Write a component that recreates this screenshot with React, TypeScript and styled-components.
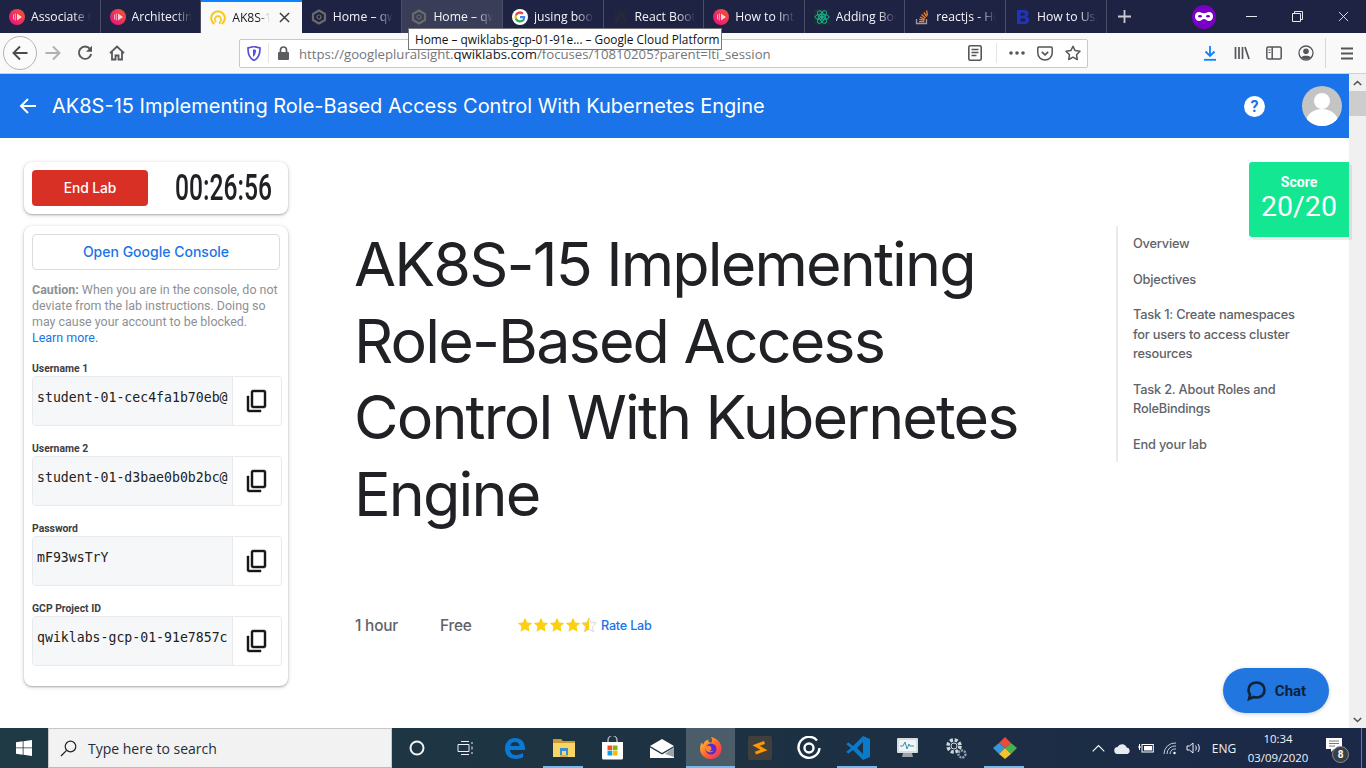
import React from "react";
import styled, { createGlobalStyle } from "styled-components";

const Global = createGlobalStyle`
  html, body { margin: 0; padding: 0; overflow: hidden; background: #fff; }
  * { box-sizing: border-box; }
`;

const UI = `"Open Sans", "Noto Sans", sans-serif`;
const GS = `Inter, "Noto Sans", sans-serif`;
const RB = `Roboto, "Liberation Sans", sans-serif`;

const Shell = styled.div`
  position: relative; width: 1366px; height: 768px; display: flex; flex-direction: column; overflow: hidden;
  font-family: ${RB};
`;

/* ---------- tab strip ---------- */
const TabStrip = styled.div`display: flex; height: 33px; background: #1f2343; flex: none;`;
const Tab = styled.div<{ $active?: boolean; $hover?: boolean }>`
  width: 100.6px; flex: none; display: flex; align-items: center; padding-left: 9px; gap: 6px; position: relative;
  color: ${p => (p.$active ? "#16181f" : "#f4f4f8")};
  background: ${p => (p.$active ? "#f9f9fa" : p.$hover ? "#3a3d58" : "transparent")};
  border-top: ${p => (p.$active ? "2px solid #0a84ff" : "none")};
  border-right: ${p => (p.$active ? "none" : "1px solid #4a4d66")};
`;
const TabIcon = styled.span`width: 16px; height: 16px; flex: none; display: flex; align-items: center; justify-content: center;`;
const TabTitle = styled.span<{ $short?: boolean }>`
  font: 400 12.2px ${UI}; white-space: nowrap; overflow: hidden; width: ${p => (p.$short ? "38px" : "60px")};
  -webkit-mask-image: linear-gradient(to right, #000 70%, transparent 100%);
  mask-image: linear-gradient(to right, #000 70%, transparent 100%);
`;
const NewTab = styled.div`width: 36px; display: flex; align-items: center; justify-content: center;`;
const StripSpace = styled.div`flex: 1;`;
const Mask = styled.div`
  width: 24px; height: 24px; border-radius: 50%; background: #7a00c8; display: flex; align-items: center; justify-content: center; margin-right: 12px; align-self: center;
`;
const WinBtn = styled.div`width: 46px; display: flex; align-items: center; justify-content: center;`;

/* ---------- navigation bar ---------- */
const NavBar = styled.div`height: 41px; flex: none; background: #f9f9fa; display: flex; align-items: center; border-bottom: 1px solid #cfd0d2;`;
const BackCircle = styled.div`
  width: 34px; height: 34px; margin-left: 3px; border: 1px solid #b4b4b6; border-radius: 50%; background: #fbfbfb;
  display: flex; align-items: center; justify-content: center; flex: none;
`;
const NavIcon = styled.div<{ $w?: number }>`width: ${p => p.$w ?? 32}px; flex: none; display: flex; align-items: center; justify-content: center;`;
const UrlBar = styled.div`
  width: 849px; margin-left: 106px; height: 29px; flex: none; background: #fff; border: 1px solid #c9c9cb; border-radius: 2px;
  display: flex; align-items: center;
`;
const UrlDivider = styled.span`width: 1px; height: 20px; background: #e4e4e6; flex: none;`;
const PageActionsDivider = styled(UrlDivider)`margin: 0 6px 0 5px;`;
const UrlText = styled.div`flex: 1; font: 400 13.2px ${UI}; color: #75757a; white-space: nowrap; padding: 1px 0 0 1px;`;
const UrlHost = styled.span`color: #18181c;`;
const NavSpacer = styled.div`width: 106px; flex: none;`;
const NavDivider = styled.span`width: 1px; height: 30px; background: #d8d8da; margin: 0 6px 0 3px; flex: none;`;

/* ---------- page ---------- */
const Viewport = styled.div`flex: 1; display: flex; min-height: 0;`;
const Page = styled.div`flex: 1; position: relative; background: #fff; display: flex; flex-direction: column; min-width: 0;`;
const Scrollbar = styled.div`width: 17px; flex: none; background: #f0f0f0; display: flex; flex-direction: column; align-items: center; justify-content: space-between;`;
const ScrollTop = styled.div`width: 100%; display: flex; flex-direction: column; align-items: center;`;
const ScrollArrow = styled.div`height: 17px; display: flex; align-items: center; justify-content: center;`;
const Thumb = styled.div`width: 100%; height: 25px; background: #cdcdcd;`;

const Header = styled.header`height: 64px; flex: none; background: #1a73e8; display: flex; align-items: center; color: #fff; padding: 0 7px 0 18px;`;
const HeaderTitle = styled.h1`flex: 1; margin: 0 0 0 14px; font: 400 20px ${GS}; letter-spacing: 0; white-space: nowrap;`;
const HelpIcon = styled.div`
  width: 21px; height: 21px; border-radius: 50%; background: #fff; color: #1a73e8; font: 700 16px ${RB};
  display: flex; align-items: center; justify-content: center; margin-right: 37px;
`;
const Avatar = styled.div`width: 40px; height: 40px; border-radius: 50%; overflow: hidden; background: #c4c4c4;`;

const Body = styled.div`flex: 1; display: flex; padding: 24px 0 0 24px; min-height: 0;`;
const Side = styled.aside`width: 264px; flex: none; display: flex; flex-direction: column; gap: 12px;`;
const Card = styled.div`background: #fff; border-radius: 8px; box-shadow: 0 1px 2px rgba(60,64,67,.35), 0 1px 5px rgba(60,64,67,.18);`;
const TimerCard = styled(Card)`height: 52px; padding: 8px; display: flex; align-items: center; justify-content: space-between;`;
const EndBtn = styled.button`
  width: 116px; height: 36px; border: 0; border-radius: 4px; background: #d93025; color: #fff; font: 500 13.8px ${GS}; letter-spacing: -0.1px;
`;
const Timer = styled.div`
  font: 500 36px/36px ${RB}; color: #202124; width: 95px; margin-right: 10px; white-space: nowrap; transform: scaleX(.685); transform-origin: left center;
`;
const CredCard = styled(Card)`height: 460px; padding: 8px 6px 0 8px;`;
const ConsoleBtn = styled.div`
  width: 248px; height: 36px; border: 1px solid #dadce0; border-radius: 4px; color: #1a73e8; font: 500 14px ${GS}; padding-bottom: 1px;
  display: flex; align-items: center; justify-content: center;
`;
const Caution = styled.p`margin: 12px 0 0; width: 250px; font: 400 12.45px/16px ${RB}; color: #8d9196;`;
const Strong = styled.b`font-weight: 700;`;
const LearnMore = styled.a`color: #1a73e8; display: block;`;
const Fields = styled.div`margin-top: 14px; display: flex; flex-direction: column; gap: 14px;`;
const Label = styled.div`font: 700 10.4px/16px ${RB}; color: #3c4043; height: 16px; padding-top: 1px;`;
const FieldBox = styled.div`height: 50px; width: 250px; border: 1px solid #e8eaed; border-radius: 4px; display: flex;`;
const FieldValue = styled.div`
  flex: 1; min-width: 0; background: #f6f7f9; font: 400 13.2px/20px "DejaVu Sans Mono", "Liberation Mono", monospace; color: #202124; padding: 11px 4px 0 4px; white-space: nowrap; overflow: hidden;
  border-right: 1px solid #e8eaed; border-radius: 4px 0 0 4px;
`;
const CopyBtn = styled.div`width: 48px; flex: none; display: flex; align-items: center; justify-content: center;`;

const Main = styled.main`width: 700px; margin-left: 66px; flex: none; padding-top: 64px;`;
const Title = styled.h2`margin: 0; font: 400 61px/76.5px ${GS}; letter-spacing: -1.85px; color: #202124;`;
const Meta = styled.div`margin-top: 82px; display: flex; align-items: center; height: 22px; margin-left: 1px;`;
const MetaItem = styled.span<{ $w: number }>`width: ${p => p.$w}px; font: 500 15.4px ${GS}; color: #5f6368; letter-spacing: -0.2px;`;
const Stars = styled.span`display: flex; margin-right: 4px;`;
const RateLab = styled.a`font: 500 12.6px ${GS}; color: #1a73e8; letter-spacing: -0.2px;`;

const Toc = styled.nav`
  margin: 64px 0 0 62px; width: 200px; height: 236px; border-left: 2px solid #e8eaed; padding: 8px 0 0 15px; display: flex; flex-direction: column; gap: 16px; flex: none;
`;
const TocItem = styled.div`font: 500 12.8px/19.5px ${GS}; color: #5f6368; letter-spacing: -0.2px; width: 170px;`;

const Score = styled.div`
  position: absolute; right: 0; top: 88px; width: 100px; height: 75px; background: #14e792; color: #fff; border-radius: 3px 0 0 3px;
  box-shadow: 3px 3px 0 rgba(0,0,0,.08); display: flex; flex-direction: column; align-items: center; padding-top: 12px;
`;
const ScoreLabel = styled.div`font: 700 14px/16px ${RB};`;
const ScoreValue = styled.div`font: 400 28.5px/34px ${RB};`;
const Chat = styled.div`
  position: absolute; right: 20px; bottom: 15px; width: 106px; height: 45px; border-radius: 23px; background: #2176e0; color: #10223a;
  display: flex; align-items: center; justify-content: center; gap: 8px; font: 700 15px ${RB}; box-shadow: 0 1px 4px rgba(0,0,0,.2);
`;

const Tooltip = styled.div`
  position: absolute; left: 408px; top: 28px; width: 314px; height: 22px; background: #fff; border: 1px solid #767676; color: #111;
  font: 400 11.85px/20px ${UI}; padding-left: 6px; white-space: nowrap; z-index: 5;
`;

/* ---------- taskbar ---------- */
const Taskbar = styled.div`
  height: 40px; flex: none; display: flex; align-items: center; color: #fff;
  background: linear-gradient(to right, #1f3a44, #1d3242 50%, #1b2848);
`;
const StartBtn = styled.div`width: 48px; display: flex; align-items: center; justify-content: center; flex: none;`;
const SearchBox = styled.div`
  width: 344px; height: 40px; flex: none; background: #f2f2f2; border: 1px solid #c6c8c9; border-bottom-color: #b8babb; display: flex; align-items: center; padding-left: 11px; gap: 11px;
  color: #1c2f3a; font: 400 14px ${UI};
`;
const TaskIcon = styled.div<{ $open?: boolean; $active?: boolean }>`
  width: 49px; height: 40px; flex: none; display: flex; align-items: center; justify-content: center; position: relative;
  background: ${p => (p.$active ? "#4a5d69" : "transparent")};
  &::after {
    content: ""; display: ${p => (p.$open ? "block" : "none")}; position: absolute; bottom: 0; height: 2px; background: #76b9ed;
    left: ${p => (p.$active ? "0" : "4px")}; right: ${p => (p.$active ? "0" : "5px")};
  }
`;
const TaskSpace = styled.div`flex: 1;`;
const Tray = styled.div<{ $w: number }>`width: ${p => p.$w}px; height: 40px; flex: none; display: flex; align-items: center; justify-content: center; font: 400 12px ${UI}; color: #f0f3f6;`;
const Clock = styled.div`width: 70px; flex: none; text-align: center; font: 400 11.4px/19px ${UI}; color: #f0f3f6; margin-left: 1px;`;
const Notify = styled.div`width: 48px; height: 40px; flex: none; position: relative; display: flex; align-items: center; justify-content: center;`;
const NotifyBadge = styled.span`
  position: absolute; left: 19px; top: 18px; width: 17px; height: 17px; border-radius: 50%; background: #3a3f45; border: 1px solid #8a8d90; color: #fff;
  font: 700 10px/15px ${RB}; text-align: center;
`;
const DesktopEdge = styled.div`width: 5px; height: 40px; flex: none; border-left: 1px solid #6d7a88;`;

/* ---------- drawings ---------- */
const PS = () => (
  <svg width="16" height="16" viewBox="0 0 16 16">
    <defs><linearGradient id="ps" x1="0" y1="1" x2="1" y2="0"><stop offset="0" stopColor="#e80a89" /><stop offset="1" stopColor="#f15b2a" /></linearGradient></defs>
    <circle cx="8" cy="8" r="8" fill="url(#ps)" />
    <path d="M4.500 5.500v5M6.300 4.500v7" stroke="#ffc6d6" strokeWidth=".8" />
    <path d="M8 4.500v7L13 8z" fill="#ffd0dc" />
  </svg>
);
const Qwik = () => (
  <svg width="16" height="16" viewBox="0 0 16 16" fill="none">
    <path d="M4.500 14A6.800 6.800 0 1 1 11.500 14" stroke="#fbc816" strokeWidth="2" />
    <path d="M6.300 12A3.200 3.200 0 1 1 9.700 12V14" stroke="#fbc816" strokeWidth="1.600" />
  </svg>
);
const Hex = () => (
  <svg width="16" height="16" viewBox="0 0 16 16" fill="none">
    <path d="M8 1.500 14 5v6l-6 3.500L2 11V5z" stroke="#6a6a6a" strokeWidth="2.200" strokeLinejoin="round" />
    <circle cx="8" cy="8" r="2" stroke="#6a6a6a" strokeWidth="1.200" />
  </svg>
);
const G = () => (
  <svg width="16" height="16" viewBox="0 0 16 16">
    <circle cx="8" cy="8" r="8" fill="#fff" />
    <path d="M13.200 8.200c0-.4 0-.8-.1-1.200H8v2.200h3a2.500 2.500 0 0 1-1.100 1.700v1.400h1.800c1-1 1.500-2.400 1.500-4.100z" fill="#4285f4" />
    <path d="M8 13.500c1.500 0 2.700-.5 3.700-1.400l-1.800-1.400c-.5.300-1.100.5-1.900.5-1.400 0-2.700-1-3.100-2.300H3v1.400a5.500 5.500 0 0 0 5 3.200z" fill="#34a853" />
    <path d="M4.900 8.900a3.300 3.300 0 0 1 0-2.100V5.400H3a5.500 5.500 0 0 0 0 4.900z" fill="#fbbc05" />
    <path d="M8 4.700c.8 0 1.500.3 2.100.8l1.600-1.600A5.500 5.500 0 0 0 3 5.400l1.900 1.400C5.300 5.600 6.600 4.700 8 4.700z" fill="#ea4335" />
  </svg>
);
const DarkBoot = () => (
  <svg width="16" height="16" viewBox="0 0 16 16"><rect x="1" y="1" width="14" height="14" fill="#23253e" /><path d="M3 13 8 3l5 10" stroke="#2c2e46" fill="none" /></svg>
);
const Atom = () => (
  <svg width="16" height="16" viewBox="0 0 16 16" fill="none" stroke="#1bb08b" strokeWidth="1">
    <rect width="16" height="16" fill="#1c2f38" stroke="none" />
    <ellipse cx="8" cy="8" rx="7" ry="2.800" />
    <ellipse cx="8" cy="8" rx="7" ry="2.800" transform="rotate(60 8 8)" />
    <ellipse cx="8" cy="8" rx="7" ry="2.800" transform="rotate(120 8 8)" />
    <circle cx="8" cy="8" r="1.400" fill="#1bb08b" />
  </svg>
);
const SO = () => (
  <svg width="16" height="16" viewBox="0 0 16 16" fill="none">
    <path d="M2.500 10v4.500h10V10" stroke="#9a9aa0" strokeWidth="1.300" />
    <path d="M5 12.600h5.300M5.200 10.400l5.200 1M6 8l4.800 2.300M7.500 5.600l4 3.400M9.800 3.500l3 4.200M12.500 1.500l1 5" stroke="#f48024" strokeWidth="1.300" />
  </svg>
);
const BootB = () => (
  <svg width="16" height="16" viewBox="0 0 16 16"><path fillRule="evenodd" d="M2 1h7.500c2.600 0 4 1.400 4 3.500 0 1.300-.7 2.400-1.900 2.900 1.600.4 2.600 1.600 2.600 3.300 0 2.600-1.800 4.300-4.700 4.300H2zm3.600 2.800v3h2.600c1.100 0 1.700-.5 1.700-1.500s-.6-1.500-1.700-1.500zm0 5.500v3.300h3c1.200 0 1.900-.6 1.900-1.700s-.7-1.600-2-1.600z" fill="#2133b8" /></svg>
);
const Close = ({ c = "#fff", s = 12, w = 1 }: { c?: string; s?: number; w?: number }) => (
  <svg width={s} height={s} viewBox="0 0 12 12"><path d="M1 1l10 10M11 1 1 11" stroke={c} strokeWidth={w} /></svg>
);
const I = ({ w = 16, h = 16, children }: { w?: number; h?: number; children: React.ReactNode }) => (
  <svg width={w} height={h} viewBox={`0 0 ${w} ${h}`} fill="none">{children}</svg>
);
const ink = "#56565a";
const Copy = () => (
  <svg width="24" height="24" viewBox="0 0 24 24">
    <g transform="matrix(1 0 0 -1 0 24)">
      <path d="M16 1H4c-1.100 0-2 .9-2 2v14h2V3h12V1zm3 4H8c-1.100 0-2 .9-2 2v14c0 1.100.9 2 2 2h11c1.100 0 2-.9 2-2V7c0-1.100-.9-2-2-2zm0 16H8V7h11v14z" fill="#16181c" stroke="#16181c" strokeWidth=".45" />
    </g>
  </svg>
);
const Star = ({ half }: { half?: boolean }) => (
  <svg width="16" height="16" viewBox="0 0 16 16">
    <path d="M8 .8l2.200 4.700 5 .6-3.700 3.500 1 5.100L8 12.200l-4.500 2.500 1-5.100L.8 6.100l5-.6z" fill={half ? "none" : "#fdd00f"} stroke={half ? "#d8d8d8" : "none"} />
    {half && <path d="M8 .8v11.400l-4.500 2.500 1-5.100L.8 6.100l5-.6z" fill="#fdd00f" />}
  </svg>
);

const tabs: { t: string; i: React.ReactNode; a?: boolean; h?: boolean }[] = [
  { t: "Associate Cloud", i: <PS /> },
  { t: "Architecting with", i: <PS /> },
  { t: "AK8S-15 Imp", i: <Qwik />, a: true },
  { t: "Home – qwiklabs", i: <Hex /> },
  { t: "Home – qwiklabs", i: <Hex />, h: true },
  { t: "jusing bootstrap", i: <G /> },
  { t: "React Bootstrap", i: <DarkBoot /> },
  { t: "How to Integrate", i: <PS /> },
  { t: "Adding Bootstrap", i: <Atom /> },
  { t: "reactjs - How to", i: <SO /> },
  { t: "How to Use Bootstrap", i: <BootB /> },
];

const fields = [
  { l: "Username 1", v: "student-01-cec4fa1b70eb@" },
  { l: "Username 2", v: "student-01-d3bae0b0b2bc@" },
  { l: "Password", v: "mF93wsTrY" },
  { l: "GCP Project ID", v: "qwiklabs-gcp-01-91e7857c" },
];

export default function App() {
  return (
    <Shell>
      <Global />
      <TabStrip>
        {tabs.map((t, k) => (
          <Tab key={k} $active={t.a} $hover={t.h}>
            <TabIcon>{t.i}</TabIcon>
            <TabTitle $short={t.a}>{t.t}</TabTitle>
            {t.a && <TabIcon><Close c="#3c3c40" s={11} w={1.6} /></TabIcon>}
          </Tab>
        ))}
        <NewTab>
          <I w={15} h={15}><path d="M7.500 1v13M1 7.500h13" stroke="#c9cad4" strokeWidth="1.800" /></I>
        </NewTab>
        <StripSpace />
        <Mask>
          <svg width="18" height="9" viewBox="0 0 18 9"><path fillRule="evenodd" d="M4 0c2 0 3 1.300 5 1.300S12 0 14 0c2.500 0 4 1.800 4 4.200C18 7 16.300 9 13.800 9 11.700 9 10.800 7 9 7S6.300 9 4.200 9C1.700 9 0 7 0 4.200 0 1.800 1.500 0 4 0z" fill="#fff" /><ellipse cx="5" cy="4.300" rx="2" ry="1.300" fill="#7a00c8" /><ellipse cx="13" cy="4.300" rx="2" ry="1.300" fill="#7a00c8" /></svg>
        </Mask>
        <WinBtn><I w={11} h={11}><path d="M0 5.500h11" stroke="#e8e8ee" /></I></WinBtn>
        <WinBtn><I w={11} h={11}><path d="M.5 2.500h8v8h-8zM2.500 2.500v-2h8v8h-2" stroke="#e8e8ee" /></I></WinBtn>
        <WinBtn><Close c="#e8e8ee" s={11} /></WinBtn>
      </TabStrip>

      <NavBar>
        <BackCircle>
          <I w={18} h={18}><path d="M16.500 9H2.500M9 2.500 2.500 9 9 15.500" stroke="#4a4a4f" strokeWidth="1.900" /></I>
        </BackCircle>
        <NavIcon $w={32}>
          <I w={18} h={18}><path d="M1.500 9h14M9 2.500 15.500 9 9 15.500" stroke="#b1b1b3" strokeWidth="1.900" /></I>
        </NavIcon>
        <NavIcon $w={32}>
          <I w={16} h={16}><path d="M13 3.800A6.200 6.200 0 1 0 14.200 9" stroke={ink} strokeWidth="1.900" /><path d="M15 .8v6h-6z" fill={ink} /></I>
        </NavIcon>
        <NavIcon $w={32}>
          <I w={16} h={16}><path d="M1 8.200 8 1.500l7 6.700M3 7v7.500h3.500v-4h3v4H13V7" stroke={ink} strokeWidth="1.800" /></I>
        </NavIcon>
        <UrlBar>
          <NavIcon $w={28}>
            <svg width="14" height="15" viewBox="0 0 14 15"><path d="M7 .5 13 2c.2 6.500-1.800 10.500-6 12.500C2.800 12.500.8 8.500 1 2z" fill="none" stroke="#5a4fd8" strokeWidth="1.700" /><path d="M7.500 3.500h-1.500L6 11c2-1.500 3-3.500 3-7z" fill="#5a4fd8" /></svg>
          </NavIcon>
          <UrlDivider />
          <NavIcon $w={29}>
            <svg width="13" height="15" viewBox="0 0 13 15"><path d="M3.500 6V4a3 3 0 0 1 6 0v2" fill="none" stroke="#5c5c60" strokeWidth="1.700" /><rect x="1" y="6" width="11" height="8" rx="1" fill="#5c5c60" /></svg>
          </NavIcon>
          <UrlText>https://googlepluralsight.<UrlHost>qwiklabs.com</UrlHost>/focuses/10810205?parent=lti_session</UrlText>
          <NavIcon $w={32}>
            <I w={14} h={16}><rect x=".8" y=".8" width="12.400" height="14.400" rx="1.500" stroke={ink} strokeWidth="1.600" /><path d="M3.500 4.500h7M3.500 7.500h7M3.500 10.500h5" stroke={ink} strokeWidth="1.300" /></I>
          </NavIcon>
          <PageActionsDivider />
          <NavIcon $w={28}>
            <I w={16} h={4}><circle cx="2" cy="2" r="1.800" fill={ink} /><circle cx="8" cy="2" r="1.800" fill={ink} /><circle cx="14" cy="2" r="1.800" fill={ink} /></I>
          </NavIcon>
          <NavIcon $w={28}>
            <I w={16} h={15}><path d="M1.800 1h12.400a1 1 0 0 1 1 1v5c0 4-3.200 7-7.200 7S.8 11 .8 7V2a1 1 0 0 1 1-1z" stroke={ink} strokeWidth="1.500" /><path d="M4.800 5.800 8 8.800l3.200-3" stroke={ink} strokeWidth="1.700" /></I>
          </NavIcon>
          <NavIcon $w={28}>
            <I w={16} h={16}><path d="M8 1.200l2.100 4.400 4.900.7-3.500 3.400.8 4.800L8 12.200l-4.300 2.300.8-4.800L1 6.300l4.900-.7z" stroke={ink} strokeWidth="1.500" strokeLinejoin="round" /></I>
          </NavIcon>
        </UrlBar>
        <NavSpacer />
        <NavIcon>
          <I w={14} h={16}><path d="M7 1v10M2.500 6.500 7 11l4.500-4.500" stroke="#0a84ff" strokeWidth="1.800" /><path d="M1 14.800h12" stroke="#0a84ff" strokeWidth="1.800" /></I>
        </NavIcon>
        <NavIcon>
          <I w={16} h={14}><path d="M1.500 1v12M5 1v12M8.500 1v12M11 1l4 12" stroke={ink} strokeWidth="1.700" /></I>
        </NavIcon>
        <NavIcon>
          <I w={16} h={14}><rect x=".8" y="1" width="14.400" height="12" rx="1.500" stroke={ink} strokeWidth="1.500" /><path d="M6.200 1v12" stroke={ink} strokeWidth="1.500" /><path d="M2.500 4h2M2.500 6.500h2" stroke={ink} /></I>
        </NavIcon>
        <NavIcon>
          <I w={16} h={16}><circle cx="8" cy="8" r="7" stroke={ink} strokeWidth="1.300" /><circle cx="8" cy="6.300" r="2.800" fill={ink} /><path d="M3 12.500C4 10.200 12 10.200 13 12.500 11.500 14.500 4.500 14.500 3 12.500z" fill={ink} /></I>
        </NavIcon>
        <NavDivider />
        <NavIcon $w={30}>
          <I w={14} h={13}><path d="M1 1.500h12M1 6.500h12M1 11.500h12" stroke={ink} strokeWidth="1.800" /></I>
        </NavIcon>
      </NavBar>

      <Viewport>
        <Page>
          <Header>
            <I w={20} h={20}><path d="M18 10H3M10 3l-7 7 7 7" stroke="#fff" strokeWidth="2" /></I>
            <HeaderTitle>AK8S-15 Implementing Role-Based Access Control With Kubernetes Engine</HeaderTitle>
            <HelpIcon>?</HelpIcon>
            <Avatar>
              <svg width="40" height="40" viewBox="0 0 40 40"><circle cx="20" cy="15" r="8" fill="#fff" /><ellipse cx="20" cy="36" rx="16" ry="13" fill="#fff" /></svg>
            </Avatar>
          </Header>
          <Body>
            <Side>
              <TimerCard>
                <EndBtn>End Lab</EndBtn>
                <Timer>00:26:56</Timer>
              </TimerCard>
              <CredCard>
                <ConsoleBtn>Open Google Console</ConsoleBtn>
                <Caution>
                  <Strong>Caution:</Strong> When you are in the console, do not deviate from the lab instructions. Doing so may cause your account to be blocked.
                  <LearnMore>Learn more.</LearnMore>
                </Caution>
                <Fields>
                  {fields.map(f => (
                    <div key={f.l}>
                      <Label>{f.l}</Label>
                      <FieldBox>
                        <FieldValue>{f.v}</FieldValue>
                        <CopyBtn><Copy /></CopyBtn>
                      </FieldBox>
                    </div>
                  ))}
                </Fields>
              </CredCard>
            </Side>
            <Main>
              <Title>AK8S-15 Implementing Role-Based Access Control With Kubernetes Engine</Title>
              <Meta>
                <MetaItem $w={85}>1 hour</MetaItem>
                <MetaItem $w={77}>Free</MetaItem>
                <Stars><Star /><Star /><Star /><Star /><Star half /></Stars>
                <RateLab>Rate Lab</RateLab>
              </Meta>
            </Main>
            <Toc>
              <TocItem>Overview</TocItem>
              <TocItem>Objectives</TocItem>
              <TocItem>Task 1: Create namespaces for users to access cluster resources</TocItem>
              <TocItem>Task 2. About Roles and RoleBindings</TocItem>
              <TocItem>End your lab</TocItem>
            </Toc>
          </Body>
          <Score>
            <ScoreLabel>Score</ScoreLabel>
            <ScoreValue>20/20</ScoreValue>
          </Score>
          <Chat>
            <svg width="21" height="21" viewBox="0 0 21 21"><path d="M10.500 2.500c4.500 0 8 3 8 7.500s-3.500 7.500-8 7.500c-1 0-2-.2-2.800-.5L3 19l1-4.300C3 13.500 2.500 11.800 2.500 10c0-4.500 3.500-7.500 8-7.500z" fill="none" stroke="#10223a" strokeWidth="2.600" /></svg>
            Chat
          </Chat>
        </Page>
        <Scrollbar>
          <ScrollTop>
            <ScrollArrow><I w={9} h={6}><path d="M.8 5 4.500 1.500 8.200 5" stroke="#505050" strokeWidth="1.600" /></I></ScrollArrow>
            <Thumb />
          </ScrollTop>
          <ScrollArrow><I w={9} h={6}><path d="M.8 1 4.500 4.500 8.200 1" stroke="#505050" strokeWidth="1.600" /></I></ScrollArrow>
        </Scrollbar>
      </Viewport>

      <Taskbar>
        <StartBtn>
          <svg width="16" height="16" viewBox="0 0 16 16"><path d="M0 2.300 6.700 1.300V7.500H0zM7.500 1.200 16 0v7.500H7.500zM0 8.300h6.700v6.400L0 13.700zM7.500 8.300H16V16l-8.500-1.200z" fill="#fff" /></svg>
        </StartBtn>
        <SearchBox>
          <I w={17} h={17}><circle cx="10.500" cy="6.500" r="5.300" stroke="#222" strokeWidth="1.200" /><path d="M6.600 10.400 1 16" stroke="#222" strokeWidth="1.300" /></I>
          Type here to search
        </SearchBox>
        <TaskIcon>
          <I w={16} h={16}><circle cx="8" cy="8" r="6.500" stroke="#f2f5f6" strokeWidth="2" /></I>
        </TaskIcon>
        <TaskIcon>
          <I w={18} h={14}><path d="M4 .5h8M1 3.500h11v7H1zM4 13.500h8M15 1v2M15 5.500v3M15 11v2" stroke="#eef" strokeWidth="1" /></I>
        </TaskIcon>
        <TaskIcon>
          <svg width="22" height="22" viewBox="0 0 22 22"><path d="M11 1c6 0 10 4 10 10.500V13H6c.2 3 2.500 5 6 5 2.500 0 5-.8 7-2v4.300c-2 1.100-4.700 1.700-7.500 1.700C5 22 1 18 1 11.500 1 5.500 5 1 11 1zm4.500 8c0-2.500-1.800-4-4.500-4S6.600 6.500 6.200 9z" fill="#0a78d7" fillRule="evenodd" /></svg>
        </TaskIcon>
        <TaskIcon $open>
          <svg width="22" height="20" viewBox="0 0 22 20"><path d="M0 1h8l2 2h12v4H0z" fill="#c99a2e" /><path d="M0 5h22v14H0z" fill="#f8d568" /><path d="M7 10h8v7h-2v-4H9v4H7z" fill="#3a8fd0" /><path d="M7 17h8v2H7z" fill="#e0b040" /></svg>
        </TaskIcon>
        <TaskIcon>
          <svg width="23" height="24" viewBox="0 0 23 24"><path d="M7 7V4a4.500 4.500 0 0 1 9 0v3" stroke="#f2f2f2" fill="none" /><path d="M1 6h21v16a1.500 1.500 0 0 1-1.500 1.500h-18A1.500 1.500 0 0 1 1 22z" fill="#fff" /><path d="M6.500 9.500h4.700v4.700H6.500z" fill="#f25022" /><path d="M11.800 9.500h4.700v4.700h-4.700z" fill="#7fba00" /><path d="M6.500 14.800h4.700v4.700H6.500z" fill="#00a4ef" /><path d="M11.800 14.800h4.700v4.700h-4.700z" fill="#ffb900" /></svg>
        </TaskIcon>
        <TaskIcon>
          <svg width="24" height="19" viewBox="0 0 24 19"><path d="M0 7 12 0l12 7-12 7z" fill="#fff" /><path d="M0 8.500 12 15.500 24 8.500V19H0z" fill="#fff" /><path d="M24 8 15 15l9 3z" fill="#9aa5ab" /></svg>
        </TaskIcon>
        <TaskIcon $open $active>
          <svg width="24" height="24" viewBox="0 0 24 24">
            <defs><linearGradient id="ff" x1="0" y1="0" x2="1" y2="1"><stop offset="0" stopColor="#ffd53a" /><stop offset=".5" stopColor="#ff6a2a" /><stop offset="1" stopColor="#f0266a" /></linearGradient></defs>
            <path d="M12 23C5.500 23 1 18.500 1 12.500 1 10 2 7.500 3 6.500c.2 1 .6 1.800 1.200 2.300C5 6 7 4 9.500 3.500 9 5 9.500 6 11 6.500c3 .5 2.500-3 1-5.500 5 1 10.500 5 10.500 11.500C22.500 18.500 18 23 12 23z" fill="url(#ff)" />
            <circle cx="12" cy="13" r="5.500" fill="#5a2ad0" />
            <path d="M6 11c2-2 5-1.500 6 0 1 2 .5 3.500-2 4 4 1 7-1 7-4-1 6-10 8-11 0z" fill="#ff8a2a" />
          </svg>
        </TaskIcon>
        <TaskIcon>
          <svg width="24" height="24" viewBox="0 0 24 24"><rect width="24" height="24" rx="2" fill="#403f3c" /><path d="M16.500 6.500 8 9.500l8 4.500-8.500 3.200" fill="none" stroke="#ff9800" strokeWidth="3" /></svg>
        </TaskIcon>
        <TaskIcon>
          <I w={24} h={24}><path d="M20 4.500A10.500 10.500 0 1 0 22.500 12" stroke="#fff" strokeWidth="2.400" /><circle cx="12" cy="12" r="4.500" stroke="#fff" strokeWidth="2.400" /></I>
        </TaskIcon>
        <TaskIcon $open>
          <svg width="24" height="24" viewBox="0 0 24 24"><path d="M17 0 7 10 2.500 6.500 0 8l5 4-5 4 2.500 1.500L7 14l10 10 7-3V3zm0 6v12l-6-6z" fill="#0a7acb" /></svg>
        </TaskIcon>
        <TaskIcon>
          <svg width="24" height="22" viewBox="0 0 24 22"><rect x="2" y="1" width="21" height="15" rx="1" fill="#d8dde0" /><rect x="4" y="3" width="17" height="11" fill="#f0f4f6" /><path d="M5 9h3l2-4 2 7 2-5 1 2h4" stroke="#3a8fb0" fill="none" /><path d="M8 16h9l1 4H7z" fill="#9aa5ab" /></svg>
        </TaskIcon>
        <TaskIcon>
          <svg width="24" height="24" viewBox="0 0 24 24"><circle cx="10" cy="10" r="6" fill="none" stroke="#cfd8dc" strokeWidth="3.500" strokeDasharray="3 1.700" /><circle cx="10" cy="10" r="3" fill="#1f3440" stroke="#cfd8dc" /><circle cx="18" cy="18" r="3.500" fill="none" stroke="#90a4ae" strokeWidth="2.400" strokeDasharray="2 1" /></svg>
        </TaskIcon>
        <TaskIcon $open>
          <svg width="24" height="24" viewBox="0 0 24 24"><path d="M12 1 18 7 12 12 6 7z" fill="#e74c3c" /><path d="M6 7 12 12 6 18 0 12z" fill="#3498db" /><path d="M18 7 24 12 18 18 12 12z" fill="#4caf50" /><path d="M12 12 18 18 12 23 6 18z" fill="#f4c430" /></svg>
        </TaskIcon>
        <TaskSpace />
        <Tray $w={24}><I w={13} h={8}><path d="M.7 7.300 6.500 1.500l5.800 5.800" stroke="#fff" strokeWidth="1.100" /></I></Tray>
        <Tray $w={24}><svg width="17" height="11" viewBox="0 0 17 11"><path d="M4 11a3.500 3.500 0 0 1-.5-7 5 5 0 0 1 9.200.6A3.300 3.300 0 0 1 13.500 11z" fill="#e8ecef" /></svg></Tray>
        <Tray $w={24}><I w={16} h={10}><rect x="4" y="1.500" width="11.300" height="7.500" stroke="#fff" /><rect x="6" y="3" width="8" height="4.500" fill="#fff" /><path d="M0 4h3M1.500 1v6" stroke="#fff" /></I></Tray>
        <Tray $w={24}><I w={14} h={14}><path d="M1 13a11 11 0 0 1 12-11M4 13a8 8 0 0 1 9-8M7 13a5 5 0 0 1 6-5" stroke="#c9cdd2" /><circle cx="11.500" cy="12" r="1.200" fill="#fff" /></I></Tray>
        <Tray $w={24}><I w={16} h={14}><path d="M1 5h2.500L7 2v10L3.500 9H1zM9.500 4.500c1 1.500 1 3.500 0 5M12 3c1.700 2.500 1.700 5.500 0 8" stroke="#eef" /></I></Tray>
        <Tray $w={36}>ENG</Tray>
        <Clock>10:34<br />03/09/2020</Clock>
        <Notify>
          <svg width="16" height="14" viewBox="0 0 16 14" style={{ marginTop: -6, marginLeft: -6 }}><path d="M0 0h16v11H8l-3 3v-3H0z" fill="#fff" /><path d="M3 3h10M3 5.500h10M3 8h6" stroke="#555" strokeWidth=".8" /></svg>
          <NotifyBadge>8</NotifyBadge>
        </Notify>
        <DesktopEdge />
      </Taskbar>
      <Tooltip>Home – qwiklabs-gcp-01-91e... – Google Cloud Platform</Tooltip>
    </Shell>
  );
}
